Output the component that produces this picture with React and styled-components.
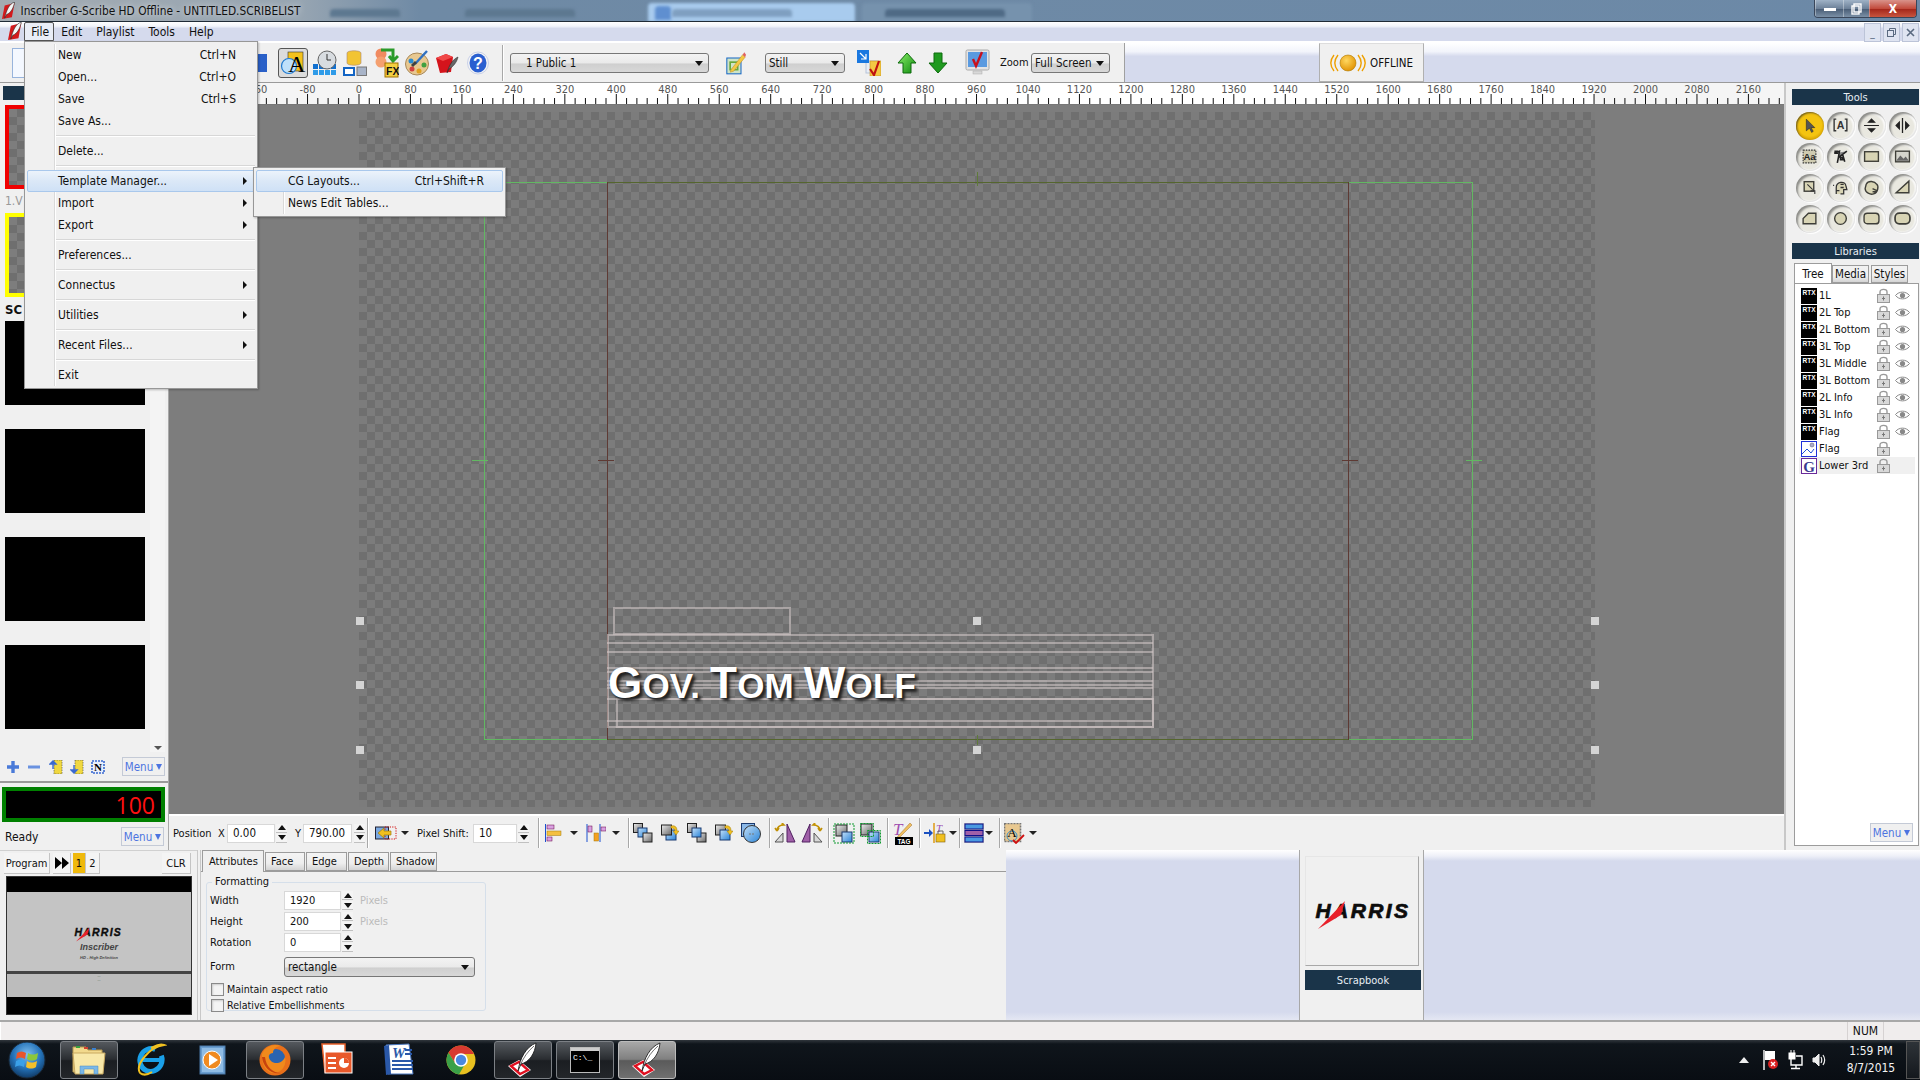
import React from "react";
import styled, { createGlobalStyle, css } from "styled-components";

const GlobalStyle = createGlobalStyle`
  html, body { margin: 0; padding: 0; background: #f0f0f0; }
  #root { width: 1920px; height: 1080px; }
  * { box-sizing: border-box; }
`;

const uiFont = `"DejaVu Sans", "Noto Sans", sans-serif`;
const navy = "#1a3449";
const menuBg = "#f0f0f0";

const Win = styled.div`
  width: 1920px;
  height: 1080px;
  display: flex;
  flex-direction: column;
  position: relative;
  overflow: hidden;
  background: ${menuBg};
  color: #111;
  font-family: ${uiFont};
  font-stretch: condensed;
  font-size: 12px;
`;

/* ---------- title bar ---------- */
const TitleBar = styled.div`
  height: 22px;
  flex: none;
  position: relative;
  overflow: hidden;
  display: flex;
  align-items: center;
  padding-left: 2px;
  gap: 5px;
  border-bottom: 1px solid #1f2a36;
  background: linear-gradient(90deg, #a3abb2 0, #97a5b2 300px, #6f8aa5 420px, #6c89a7 100%);
`;
const TitleText = styled.span`
  font-size: 11.8px;
  color: #111;
  position: relative;
  text-shadow: 0 0 6px rgba(255, 255, 255, 0.8);
`;
const GlassBlur = styled.div`
  position: absolute;
  left: ${(p) => p.$x}px;
  top: ${(p) => p.$y}px;
  width: ${(p) => p.$w}px;
  height: ${(p) => p.$h}px;
  background: ${(p) => p.$c};
  border-radius: 4px 4px 0 0;
  filter: blur(1.5px);
`;
const CaptionGroup = styled.div`
  position: absolute;
  right: 3px;
  top: 0;
  height: 18px;
  display: flex;
  border: 1px solid #39465a;
  border-top: none;
  border-radius: 0 0 4px 4px;
  overflow: hidden;
`;
const CaptionBtn = styled.div`
  width: ${(p) => p.$w}px;
  display: flex;
  align-items: center;
  justify-content: center;
  color: #fff;
  font-weight: bold;
  border-left: 1px solid rgba(255, 255, 255, 0.35);
  background: ${(p) =>
    p.$close
      ? "linear-gradient(#d9938a, #c24b3c 50%, #a5281b 55%, #c8553f)"
      : "linear-gradient(#9fb2c6, #6d8199 50%, #4b5f78 55%, #7b90a6)"};
`;

/* ---------- menu bar ---------- */
const barGradient = css`
  background: linear-gradient(#fff 0, #f2f4fb 22%, #d5daed 34%, #d5daed 100%);
`;
const MenuBar = styled.div`
  height: 21px;
  flex: none;
  display: flex;
  align-items: center;
  position: relative;
  padding-left: 8px;
  border-bottom: 2px solid;
  border-image: linear-gradient(#a5a5a5 50%, #fff 50%) 1;
  ${barGradient}
`;
const MenuTitle = styled.div`
  height: 19px;
  margin-left: ${(p) => p.$ml || 0}px;
  padding: 0 7px;
  display: flex;
  align-items: center;
  ${(p) =>
    p.$open &&
    css`
      width: 30px;
      padding: 0 6px;
      background: #e9edf6;
      border: 1px solid #555;
      border-radius: 2px 2px 0 0;
    `}
`;
const MdiButtons = styled.div`
  position: absolute;
  right: 1px;
  top: 1px;
  display: flex;
  gap: 2px;
`;
const MdiBtn = styled.div`
  width: 17px;
  height: 19px;
  background: #dfe4f1;
  border: 1px solid #bcc4d8;
  color: #5a6a80;
  display: flex;
  align-items: center;
  justify-content: center;
  font-size: 10px;
`;

/* ---------- top toolbar ---------- */
const TopRow = styled.div`
  height: 40px;
  flex: none;
  display: flex;
  border-bottom: 1px solid #9a9a9a;
  ${barGradient}
`;
const Toolbar = styled.div`
  width: 1125px;
  display: flex;
  align-items: center;
  background: ${menuBg};
  border-right: 1px solid #a0a0a0;
`;
const Slot = styled.div`
  flex: none;
  display: flex;
  align-items: center;
  justify-content: center;
  margin-left: ${(p) => p.$ml || 0}px;
  width: ${(p) => p.$w}px;
  height: ${(p) => p.$h || 26}px;
`;
const PressedSlot = styled(Slot)`
  border: 1px solid #555;
  border-radius: 3px;
  background: #dcdcdc;
`;
const Sep = styled.div`
  flex: none;
  width: 1px;
  height: ${(p) => p.$h || 36}px;
  margin-left: ${(p) => p.$ml || 0}px;
  background: #a8a8a8;
  box-shadow: 1px 0 #fff;
`;
const Select = styled.div`
  flex: none;
  position: relative;
  margin-left: ${(p) => p.$ml || 0}px;
  width: ${(p) => p.$w}px;
  height: 20px;
  padding-left: ${(p) => p.$pad || 3}px;
  font-size: 11.5px;
  display: flex;
  align-items: center;
  border: 1px solid #777;
  border-radius: 3px;
  background: linear-gradient(#f3f3f3, #eaeaea 50%, #cfcfcf 55%, #d8d8d8);
  &::after {
    content: "";
    position: absolute;
    right: 5px;
    top: 7px;
    border: 4px solid transparent;
    border-top: 5px solid #111;
    border-bottom: none;
  }
`;
const BarLabel = styled.span`
  flex: none;
  margin-left: ${(p) => p.$ml || 0}px;
  ${(p) => p.$w && `width: ${p.$w}px;`}
  font-size: 11px;
  white-space: nowrap;
`;
const OfflineBox = styled.div`
  width: 105px;
  margin-left: 194px;
  display: flex;
  align-items: center;
  gap: 4px;
  padding-left: 10px;
  font-size: 11.5px;
  background: ${menuBg};
  border: 1px solid #b0b0b0;
  border-top-color: #ddd;
`;

/* ---------- middle ---------- */
const Middle = styled.div`
  height: 767px;
  flex: none;
  display: flex;
`;
const LeftPanel = styled.div`
  width: 169px;
  flex: none;
  padding-top: 3px;
  display: flex;
  flex-direction: column;
  border-right: 1px solid #a8a8a8;
`;
const PanelHead = styled.div`
  height: ${(p) => p.$h || 16}px;
  flex: none;
  margin: ${(p) => p.$m || 0};
  background: ${navy};
  color: #e8eef4;
  font-size: 11px;
  display: flex;
  align-items: center;
  justify-content: center;
`;
const ThumbList = styled.div`
  height: 647px;
  margin-top: 5px;
  flex: none;
  position: relative;
  overflow: hidden;
  padding-left: 5px;
`;
const ScrollTrack = styled.div`
  position: absolute;
  right: 3px;
  top: 0;
  bottom: 0;
  width: 15px;
  background: #f4f4f4;
  &::after {
    content: "";
    position: absolute;
    left: 4px;
    bottom: 2px;
    border: 4px solid transparent;
    border-top: 4px solid #555;
    border-bottom: none;
  }
`;
const ThumbItem = styled.div`
  height: 108px;
`;
const Thumb = styled.div`
  width: 140px;
  height: 84px;
  background: #000;
  ${(p) =>
    p.$frame &&
    css`
      border: 4px solid ${p.$frame};
      background: repeating-conic-gradient(#6f6f6f 0 25%, #7d7d7d 0 50%) 0 0 / 16px 16px;
    `}
`;
const ThumbCaption = styled.div`
  height: 24px;
  display: flex;
  align-items: center;
  font-size: ${(p) => (p.$bold ? 13 : 12)}px;
  font-weight: ${(p) => (p.$bold ? "bold" : "normal")};
  color: ${(p) => (p.$bold ? "#111" : "#999")};
`;
const LeftTools = styled.div`
  height: 29px;
  flex: none;
  display: flex;
  align-items: center;
  padding-left: 6px;
  position: relative;
`;
const MenuButton = styled.div`
  position: absolute;
  right: ${(p) => p.$r}px;
  top: ${(p) => p.$t}px;
  width: 43px;
  height: 19px;
  display: flex;
  align-items: center;
  justify-content: center;
  gap: 3px;
  font-size: 11.5px;
  color: #4d74e0;
  background: #f0f0f0;
  border: 1px solid #c4cad6;
  &::after {
    content: "";
    border: 3px solid transparent;
    border-top: 6px solid #4d74e0;
    border-bottom: none;
  }
`;
const HeavyRule = styled.div`
  height: 2px;
  flex: none;
  background: #9a9a9a;
`;
const Counter = styled.div`
  height: 35px;
  flex: none;
  margin: 4px 3px 0 2px;
  border: 4px solid #008000;
  background: #000;
  color: #ff1010;
  font-size: 23px;
  font-stretch: normal;
  font-family: "Open Sans", sans-serif;
  display: flex;
  align-items: center;
  justify-content: flex-end;
  padding-right: 6px;
`;
const ReadyRow = styled.div`
  height: 28px;
  flex: none;
  position: relative;
  display: flex;
  align-items: center;
  padding: 2px 0 0 5px;
`;

const Center = styled.div`
  width: 1615px;
  flex: none;
  display: flex;
  flex-direction: column;
`;
const RulerWrap = styled.div`
  height: 22px;
  flex: none;
  border-bottom: 1px solid #777;
  background: #f5f5f5;
`;
const Canvas = styled.div`
  height: 709px;
  flex: none;
  position: relative;
  overflow: hidden;
  background: #7d7d7d;
`;
const Checker = styled.div`
  position: absolute;
  left: 190px;
  top: 7px;
  width: 1236px;
  height: 695px;
  background: repeating-conic-gradient(#6f6f6f 0 25%, #7c7c7c 0 50%) 0 0 / 16px 16px;
`;
const Box = styled.div`
  position: absolute;
  left: ${(p) => p.$x - 169}px;
  top: ${(p) => p.$y - 105}px;
  width: ${(p) => p.$w}px;
  height: ${(p) => p.$h}px;
  ${(p) => p.$border && `border: ${p.$bw || 1}px solid ${p.$border};`}
  ${(p) => p.$fill && `background: ${p.$fill};`}
`;
const GovText = styled.div`
  position: absolute;
  left: ${608 - 169}px;
  top: ${658 - 105}px;
  color: #fff;
  font-family: "Liberation Sans", Arial, sans-serif;
  font-stretch: normal;
  font-weight: bold;
  font-size: 35px;
  line-height: 50px;
  white-space: nowrap;
  letter-spacing: 0.2px;
  text-shadow: 3px 3px 3px #222, 1px 1px 2px #333;
`;
const Cap = styled.span`
  font-size: 44px;
`;

const PosBar = styled.div`
  height: 36px;
  flex: none;
  display: flex;
  align-items: center;
  padding-left: 4px;
  font-size: 11.5px;
  background: ${menuBg};
  border-top: 2px solid #fff;
`;
const Field = styled.div`
  flex: none;
  width: ${(p) => p.$w}px;
  height: 19px;
  margin-left: ${(p) => p.$ml || 0}px;
  background: #fff;
  border: 1px solid #d8d8d8;
  display: flex;
  align-items: center;
  padding-left: ${(p) => p.$pad || 5}px;
`;
const SpinWrap = styled.div`
  flex: none;
  width: 11px;
  height: 19px;
  margin-left: ${(p) => p.$ml ?? 1}px;
  display: flex;
  flex-direction: column;
  gap: 1px;
`;
const SpinPart = styled.div`
  flex: 1;
  background: #f4f4f4;
  border-bottom: 1px solid #c0c0c0;
  display: flex;
  align-items: center;
  justify-content: center;
  &::after {
    content: "";
    border-left: 4px solid transparent;
    border-right: 4px solid transparent;
    ${(p) => (p.$down ? "border-top: 5px solid #111;" : "border-bottom: 5px solid #111;")}
  }
`;
const Drop = styled.div`
  flex: none;
  margin-left: ${(p) => p.$ml || 0}px;
  border-left: 4px solid transparent;
  border-right: 4px solid transparent;
  border-top: 4px solid #222;
`;

const RightPanel = styled.div`
  width: 136px;
  flex: none;
  padding: 6px 1px 0 6px;
  display: flex;
  flex-direction: column;
  border-left: 2px solid #c8c8c8;
  background: #f0f0f0;
`;
const ToolGrid = styled.div`
  display: grid;
  grid-template-columns: repeat(4, 31px);
  grid-auto-rows: 31px;
  margin-top: 5px;
  margin-left: 2px;
  justify-items: center;
  align-items: center;
`;
const RoundTool = styled.div`
  width: 28px;
  height: 28px;
  border-radius: 50%;
  display: flex;
  align-items: center;
  justify-content: center;
  background: ${(p) =>
    p.$on
      ? "radial-gradient(circle at 50% 45%, #f4c410 0 55%, #d39f00 75%, #9a7c20 100%)"
      : "radial-gradient(circle at 48% 52%, #e9e8e0 0 54%, #ffffff 66%, #f4f4f4 72%, #c8c8c4 84%, #8e8e8a 100%)"};
  box-shadow: ${(p) =>
    p.$on ? "inset 1px 1px 2px #6a5a20" : "inset 2px 2px 2px #8e8e8a, inset -1px -1px 1px #e4e4e4, 1px 1px 1px #fff"};
`;
const TabRow = styled.div`
  margin-top: 4px;
  height: 20px;
  flex: none;
  display: flex;
  align-items: flex-end;
  padding-left: 2px;
  font-size: 11.5px;
`;
const SmallTab = styled.div`
  flex: none;
  width: ${(p) => p.$w}px;
  height: ${(p) => (p.$on ? 21 : 18)}px;
  margin-left: ${(p) => p.$ml || 0}px;
  margin-bottom: ${(p) => (p.$on ? -1 : 0)}px;
  position: relative;
  display: flex;
  align-items: center;
  justify-content: center;
  background: ${(p) => (p.$on ? "#fff" : "linear-gradient(#f2f2f2, #f0f0f0 60%, #d4d4d4)")};
  border: 1px solid #9c9c9c;
  border-bottom: ${(p) => (p.$on ? "none" : "1px solid #9c9c9c")};
`;
const TreeFrame = styled.div`
  flex: 1;
  position: relative;
  margin: 0 0 4px 2px;
  padding: 3px 3px 0 4px;
  border: 1px solid #9c9c9c;
  background: #fff;
`;
const TreeRow = styled.div`
  height: 17px;
  display: flex;
  align-items: center;
  background: ${(p) => (p.$sel ? "#f0f0f0" : "transparent")};
  padding-left: 2px;
`;
const RtxBadge = styled.span`
  flex: none;
  width: 16px;
  height: 16px;
  background: #000;
  color: #fff;
  font-family: "Liberation Sans", sans-serif;
  font-stretch: normal;
  font-size: 6.5px;
  font-weight: bold;
  line-height: 10px;
  text-align: center;
  overflow: hidden;
`;
const TreeName = styled.span`
  flex: none;
  width: 58px;
  margin-left: 2px;
  font-size: 11px;
  white-space: nowrap;
`;

/* ---------- bottom ---------- */
const BottomRow = styled.div`
  height: 172px;
  flex: none;
  display: flex;
  border-bottom: 2px solid #a8a8a8;
`;
const ProgramPanel = styled.div`
  width: 197px;
  flex: none;
  padding: 2px 0 0 4px;
  font-size: 11px;
  border-top: 1px solid #d0d0d0;
`;
const ProgramTabs = styled.div`
  height: 21px;
  display: flex;
  align-items: stretch;
`;
const ProgTab = styled.div`
  flex: none;
  width: ${(p) => p.$w}px;
  margin-left: ${(p) => p.$ml || 0}px;
  display: flex;
  align-items: center;
  justify-content: center;
  background: ${(p) => (p.$on ? "#efb90c" : "#f4f4f4")};
  border-right: 1px solid #c4c4c4;
  border-bottom: 1px solid #c4c4c4;
`;
const Preview = styled.div`
  width: 186px;
  height: 139px;
  margin: 2px 0 0 2px;
  display: flex;
  flex-direction: column;
  background: #000;
  border: 1px solid #333;
  padding: 15px 0 17px;
`;
const PreviewMain = styled.div`
  height: 82px;
  flex: none;
  background: #c4c4c4;
  display: flex;
  flex-direction: column;
  align-items: center;
  padding-top: 36px;
  border-bottom: 3px solid #444;
`;
const PreviewLow = styled.div`
  flex: 1;
  background: #bcbcbc;
  text-align: center;
  font-size: 3px;
  line-height: 4px;
  color: #222;
`;
const TinyBrand = styled.div`
  font-family: "Liberation Sans", sans-serif;
  font-stretch: normal;
  font-style: italic;
  font-weight: bold;
  font-size: ${(p) => p.$s}px;
  line-height: ${(p) => p.$s + 2}px;
  margin-top: ${(p) => p.$mt || 0}px;
  color: #444;
  white-space: nowrap;
`;
const AttrPanel = styled.div`
  width: 809px;
  flex: none;
  border-left: 4px double #c8c8c8;
  padding-top: 1px;
  font-size: 11px;
`;
const AttrTabs = styled.div`
  height: 21px;
  display: flex;
  align-items: flex-end;
  padding-left: 1px;
  border-bottom: 1px solid #9c9c9c;
`;
const AttrTab = styled.div`
  flex: none;
  width: ${(p) => p.$w}px;
  height: ${(p) => (p.$on ? 22 : 19)}px;
  margin-bottom: ${(p) => (p.$on ? -1 : 0)}px;
  margin-right: 1px;
  padding-left: ${(p) => (p.$on ? 6 : 5)}px;
  display: flex;
  align-items: center;
  position: relative;
  background: ${(p) => (p.$on ? "#f0f0f0" : "linear-gradient(#f4f4f4, #eee 60%, #d4d4d4)")};
  border: 1px solid #9c9c9c;
  border-bottom: ${(p) => (p.$on ? "none" : "1px solid #9c9c9c")};
`;
const GroupBox = styled.fieldset`
  width: 280px;
  height: 135px;
  margin: 4px 0 0 5px;
  padding: 2px 0 0 3px;
  border: 1px solid #d5dfea;
  border-radius: 3px;
  legend {
    margin-left: 2px;
    padding: 0 3px;
    line-height: 12px;
  }
`;
const FormGrid = styled.div`
  display: grid;
  grid-template-columns: 74px auto 1fr;
  grid-auto-rows: 21px;
  align-items: center;
  margin-top: ${(p) => p.$mt ?? 0}px;
`;
const InputCell = styled.div`
  display: flex;
  align-items: center;
`;
const Unit = styled.span`
  color: #bbb;
  margin-left: 7px;
`;
const CheckList = styled.div`
  margin-top: 4px;
  font-size: 10.6px;
`;
const CheckRow = styled.label`
  display: flex;
  align-items: center;
  gap: 3px;
  height: 16px;
  padding-left: 1px;
`;
const CheckBox = styled.span`
  width: 13px;
  height: 13px;
  flex: none;
  border: 1px solid #8a8a8a;
  box-shadow: inset 1px 1px 2px #ccc;
  background: #f4f4f4;
`;
const BlueFill = styled.div`
  flex: ${(p) => (p.$grow ? 1 : "none")};
  width: ${(p) => p.$w || 0}px;
  background: linear-gradient(#fff 0, #eef0f8 6px, #d5daed 11px, #d5daed calc(100% - 8px), #e4e7f3 100%);
`;
const ScrapPanel = styled.div`
  width: 125px;
  flex: none;
  padding: 6px 2px 0 5px;
  border-left: 1px solid #a8a8a8;
  border-right: 1px solid #a8a8a8;
  background: #f0f0f0;
`;
const LogoBox = styled.div`
  width: 114px;
  height: 110px;
  display: flex;
  flex-direction: column;
  align-items: center;
  justify-content: center;
  padding-left: 5px;
  border: 1px solid #e6e6e6;
  border-right-color: #a8a8a8;
  border-bottom-color: #a8a8a8;
`;
const ScrapHead = styled(PanelHead)`
  width: 116px;
  height: 20px;
  margin-top: 4px;
`;
const HarrisWrap = styled.div`
  position: relative;
  height: ${(p) => 18 * p.$k}px;
  width: ${(p) => 98 * p.$k}px;
`;
const HarrisText = styled.span`
  position: absolute;
  left: 0;
  top: 0;
  font-family: "Liberation Sans", Arial, sans-serif;
  font-stretch: normal;
  font-style: italic;
  font-weight: bold;
  font-size: ${(p) => 21 * p.$k}px;
  line-height: ${(p) => 18 * p.$k}px;
  letter-spacing: ${(p) => 2.4 * p.$k}px;
  color: #0c0c0c;
  -webkit-text-stroke: ${(p) => 0.7 * p.$k}px #0c0c0c;
`;
const Swoosh = styled.svg`
  position: absolute;
  left: 0;
  top: 0;
`;

/* ---------- status + taskbar ---------- */
const StatusBar = styled.div`
  height: 18px;
  flex: none;
  display: flex;
  justify-content: flex-end;
  background: #f0eded;
  border-left: 1px solid #fff;
`;
const NumCell = styled.div`
  width: 37px;
  margin-right: 36px;
  display: flex;
  align-items: center;
  justify-content: center;
  border-left: 1px solid #d6d2d2;
  border-right: 1px solid #d6d2d2;
`;
const Taskbar = styled.div`
  height: 40px;
  flex: none;
  display: flex;
  align-items: center;
  padding-left: 2px;
  background: linear-gradient(#30363c 0, #0f151b 4px, #090d13 100%);
  color: #f4f4f4;
`;
const OrbSlot = styled.div`
  width: 50px;
  flex: none;
  margin-right: 8px;
  display: flex;
  justify-content: center;
`;
const TaskSlot = styled.div`
  width: 58px;
  height: 38px;
  flex: none;
  margin-right: 4px;
  display: flex;
  align-items: center;
  justify-content: center;
  border-radius: 3px;
  ${(p) =>
    p.$running &&
    css`
      border: 1px solid #7c8085;
      background: linear-gradient(#55595e, #2a2d31 48%, #1b1e22 52%, #23262a);
    `}
  ${(p) =>
    p.$active &&
    css`
      background: linear-gradient(#a8a8a8, #808080 48%, #5a5a5a 52%, #707070);
      border-color: #bbb;
    `}
`;
const Tray = styled.div`
  margin-left: auto;
  display: flex;
  align-items: center;
`;
const TrayIcon = styled.div`
  flex: none;
  margin-left: ${(p) => p.$ml}px;
  display: flex;
`;
const Clock = styled.div`
  margin-left: 16px;
  width: 56px;
  text-align: center;
  font-size: 12px;
  line-height: 17px;
`;
const ShowDesktop = styled.div`
  width: 14px;
  height: 38px;
  margin-left: 7px;
  border: 1px solid #555;
  background: linear-gradient(#2e3338, #14181d);
`;

/* ---------- popup menus ---------- */
const Popup = styled.div`
  position: absolute;
  left: ${(p) => p.$x}px;
  top: ${(p) => p.$y}px;
  width: ${(p) => p.$w}px;
  padding: 2px;
  background: ${menuBg};
  border: 1px solid #979797;
  box-shadow: 1px 1px 2px rgba(0, 0, 0, 0.25);
  z-index: 5;
  &::before {
    content: "";
    position: absolute;
    left: ${(p) => p.$gutter}px;
    top: 2px;
    bottom: 2px;
    width: 1px;
    background: #d9d9d9;
    box-shadow: 1px 0 #fff;
  }
`;
const Item = styled.div`
  height: 22px;
  position: relative;
  display: flex;
  align-items: center;
  padding-left: ${(p) => p.$pad}px;
  padding-right: ${(p) => p.$rpad || 18}px;
  justify-content: space-between;
  border: 1px solid transparent;
  border-radius: 2px;
  ${(p) =>
    p.$hot &&
    css`
      background: linear-gradient(#ecf3fb, #dbe8f7 50%, #cfe1f6);
      border-color: #a9c8ec;
    `}
`;
const Arrow = styled.span`
  position: absolute;
  right: 7px;
  top: 6px;
  border-top: 4px solid transparent;
  border-bottom: 4px solid transparent;
  border-left: 4px solid #111;
`;
const MenuSep = styled.div`
  height: 8px;
  margin-left: ${(p) => p.$ml}px;
  position: relative;
  &::after {
    content: "";
    position: absolute;
    left: 0;
    right: 0;
    top: 3px;
    height: 1px;
    background: #d7d7d7;
    box-shadow: 0 1px #fff;
  }
`;

/* ---------- icons ---------- */
const Quill = ({ size = 20 }) => (
  <svg width={size * 0.75} height={size} viewBox="0 0 15 20">
    <path d="M3 4 L14 1 L11 17 L0 19Z" fill="#d3191c" />
    <path d="M14 0 C8 2 5 9 3 18 L5 14 C10 12 13 6 14 0Z" fill="#f6f6f6" stroke="#222" strokeWidth=".6" />
  </svg>
);
const TaskQuill = () => (
  <svg width="36" height="36" viewBox="0 0 36 36">
    <path d="M3 24 L14 18 L26 28 L15 35Z" fill="#fff" />
    <path d="M6 24 L14 20 L23 28 L15 32Z" fill="none" stroke="#e01020" strokeWidth="2.4" />
    <path d="M31 1 C21 5 15 16 13 29 L16 22 C24 20 30 12 31 1Z" fill="#fff" stroke="#111" strokeWidth=".8" />
    <path d="M29 4 C23 9 18 16 15 24" stroke="#333" strokeWidth=".7" fill="none" />
  </svg>
);
const Tri = ({ up }) => (
  <svg width="20" height="22" viewBox="0 0 20 22">
    <path
      d={up ? "M10 1 L19 11 L14 11 L14 21 L6 21 L6 11 L1 11Z" : "M10 21 L19 11 L14 11 L14 1 L6 1 L6 11 L1 11Z"}
      fill={up ? "url(#gu)" : "#1f9a1f"}
      stroke="#0d6a0d"
      strokeWidth="1"
    />
    <defs>
      <linearGradient id="gu" x1="0" y1="0" x2="1" y2="1">
        <stop offset="0" stopColor="#8cf06a" />
        <stop offset="1" stopColor="#0d8a0d" />
      </linearGradient>
    </defs>
  </svg>
);
const AIcon = () => (
  <svg width="26" height="26" viewBox="0 0 26 26">
    <rect x="8" y="2" width="15" height="19" fill="#f4c21c" stroke="#333" strokeWidth=".6" />
    <circle cx="9" cy="16" r="7.5" fill="#bfe0fa" stroke="#1f7ad0" strokeWidth="1.2" />
    <text x="8" y="22" fontFamily="Liberation Serif" fontSize="24" fill="#000">A</text>
  </svg>
);
const ClockIcon = () => (
  <svg width="24" height="26" viewBox="0 0 24 26">
    {[0, 1, 2, 3].map((c) =>
      [0, 1].map((r) => <rect key={c + "" + r} x={c * 6} y={14 + r * 6} width="5" height="5" fill={r ? "#2e9be8" : "#1070d0"} />)
    )}
    <circle cx="14" cy="10" r="9" fill="#d8dce0" stroke="#666" />
    <path d="M14 4 V10 H18" stroke="#333" fill="none" />
  </svg>
);
const DbIcon = () => (
  <svg width="24" height="26" viewBox="0 0 24 26">
    <path d="M4 3 C4 0 18 0 18 3 V13 C18 16 4 16 4 13Z" fill="#f2c433" stroke="#a87" strokeWidth=".6" />
    <rect x="1" y="18" width="10" height="7" fill="#fff" stroke="#1264c4" strokeWidth="2" />
    <rect x="14" y="17" width="9.5" height="8.5" fill="#a8b4c8" stroke="#777" />
  </svg>
);
const FxIcon = () => (
  <svg width="24" height="30" viewBox="0 0 24 30">
    <circle cx="6" cy="6" r="5.5" fill="#f08a60" />
    <circle cx="6" cy="14" r="5.5" fill="#f4a070" />
    <path d="M6 2 H18 V12 M14 8 L18 13 L23 8" stroke="#2a9a2a" strokeWidth="3" fill="none" />
    <rect x="10" y="15" width="13" height="14" fill="#f4d040" stroke="#a07000" />
    <text x="11" y="27" fontFamily="Liberation Sans" fontSize="10.5" fontWeight="bold" fill="#111">FX</text>
  </svg>
);
const PaletteIcon = () => (
  <svg width="24" height="26" viewBox="0 0 24 26">
    <ellipse cx="12" cy="14" rx="11.5" ry="11" fill="#e8c890" stroke="#a88858" />
    <circle cx="6" cy="11" r="2.5" fill="#2a8ad0" />
    <circle cx="7" cy="19" r="2.5" fill="#d04040" />
    <circle cx="14" cy="21" r="2.5" fill="#e0a020" />
    <circle cx="19" cy="15" r="2.5" fill="#40a040" />
    <path d="M22 1 L10 14" stroke="#3070c0" strokeWidth="2.4" />
    <path d="M11 12 L7 16" stroke="#404040" strokeWidth="3" />
  </svg>
);
const RedBoxIcon = () => (
  <svg width="24" height="26" viewBox="0 0 24 26">
    <path d="M1 8 L11 4 L18 7 L16 22 L5 23Z" fill="#d4141c" />
    <path d="M1 8 L11 4 L18 7 L8 11Z" fill="#f04848" />
    <path d="M23 7 C18 9 14 15 12 23 L14 19 C18 17 22 12 23 7Z" fill="#666" stroke="#222" strokeWidth=".5" />
  </svg>
);
const HelpIcon = () => (
  <svg width="22" height="24" viewBox="0 0 22 24">
    <ellipse cx="11" cy="12" rx="10.5" ry="11" fill="#f4f4f4" stroke="#c8d0e8" />
    <ellipse cx="11" cy="12" rx="8.5" ry="9.5" fill="#2a5fd0" />
    <text x="11" y="18" textAnchor="middle" fontFamily="Liberation Sans" fontWeight="bold" fontSize="16" fill="#fff">?</text>
  </svg>
);
const PencilIcon = () => (
  <svg width="20" height="28" viewBox="0 0 24 28">
    <rect x="1" y="8" width="17" height="19" fill="#cfe4c8" stroke="#1264c4" strokeWidth="1.2" />
    <rect x="5" y="13" width="9" height="9" fill="none" stroke="#6aa83a" strokeWidth="2" />
    <path d="M6 22 L20 4 L23 7 L9 24 L5 25Z" fill="#f4c843" stroke="#b88a20" strokeWidth=".6" />
    <path d="M20 4 L22 1 L24 4 L23 7Z" fill="#e06060" />
  </svg>
);
const CopyCheckIcon = () => (
  <svg width="24" height="26" viewBox="0 0 24 26">
    <rect x="9" y="11" width="12" height="12" fill="#e8eef8" stroke="#b8c4d8" />
    <rect x="13" y="11" width="11" height="15" fill="#f4c843" stroke="#c09020" strokeWidth=".6" />
    <rect x="0" y="0" width="12" height="13" fill="#1a78e0" />
    <path d="M3 3 L9 9 M9 4 V9 H4" stroke="#fff" strokeWidth="1.2" fill="none" />
    <path d="M13 19 L17 25 L22 11" stroke="#c01010" strokeWidth="2.2" fill="none" />
  </svg>
);
const MonitorIcon = () => (
  <svg width="25" height="28" viewBox="0 0 25 28">
    <rect x="1" y="1" width="23" height="20" rx="1.5" fill="#e4e4e4" stroke="#aaa" />
    <rect x="3" y="3" width="19" height="15" fill="#5a9ae0" />
    <path d="M8 10 L11 17 L17 3" stroke="#c8101c" strokeWidth="2.4" fill="none" />
    <rect x="8" y="22" width="9" height="3" fill="#d8d8d8" stroke="#aaa" strokeWidth=".5" />
  </svg>
);
const OfflineIcon = () => (
  <svg width="36" height="18" viewBox="0 0 36 18">
    <defs>
      <radialGradient id="og" cx=".4" cy=".35" r=".7">
        <stop offset="0" stopColor="#ffd860" />
        <stop offset="1" stopColor="#e09000" />
      </radialGradient>
    </defs>
    <ellipse cx="18" cy="9" rx="8" ry="8" fill="url(#og)" stroke="#b07800" strokeWidth=".6" />
    <path d="M8 1 C4 6 4 12 8 17 M4 1 C0 6 0 12 4 17 M28 1 C32 6 32 12 28 17 M32 1 C36 6 36 12 32 17" stroke="#eea000" strokeWidth="1.4" fill="none" />
  </svg>
);

const g = { stroke: "#333", fill: "none", strokeWidth: 1.3 };
const shape = { fill: "#d8d4b4", stroke: "#3e3e38", strokeWidth: 1.3 };
const toolGlyphs = [
  <path d="M5 2 V13 L8 10.5 L10 14.5 L11.5 13.5 L9.5 10 H13Z" fill="#555" stroke="#222" strokeWidth=".5" />,
  <>
    <path d="M4 2 H2 V13 H4 M12 2 H14 V13 H12" {...g} />
    <text x="8" y="11.5" textAnchor="middle" fontSize="10" fontWeight="bold" fontFamily="Liberation Sans" fill="#333">A</text>
  </>,
  <path d="M1 8 H15 M5 5 L8 2 L11 5Z M5 11 L8 14 L11 11Z" stroke="#222" fill="#222" strokeWidth="1" />,
  <path d="M8 1 V15 M5 5 L2 8 L5 11Z M11 5 L14 8 L11 11Z" stroke="#222" fill="#222" strokeWidth="1.2" />,
  <>
    <rect x="2" y="2" width="12" height="12" fill="#cfcbb0" stroke="#333" strokeDasharray="1.5 1" />
    <text x="8" y="11" textAnchor="middle" fontSize="9" fontWeight="bold" fontFamily="Liberation Sans" fill="#222">Aa</text>
  </>,
  <path d="M2 5 L7 3 L6 9 L10 6 L14 3 M6 9 L5 14 M10 6 L12 13 M3 3 H5 V5 H3Z M8 9 H10 V11 H8Z" stroke="#222" fill="#888" strokeWidth="1.5" />,
  <rect x="1.5" y="3.5" width="13" height="9" {...shape} />,
  <>
    <rect x="1.5" y="3" width="13" height="10" {...shape} fill="#d4d4cc" />
    <path d="M2 12 L6 7 L9 10 L11 8 L14 12Z" fill="#666" />
  </>,
  <>
    <rect x="3" y="2.5" width="9" height="9" {...shape} />
    <path d="M6 5 L11 10 M9 11 H13 V14" stroke="#333" fill="none" />
  </>,
  <path d="M4 14 V8 C4 3 12 1 13 6 L14 10 H11 V14 H8 M2 6 H1 M4 11 H7 M8 5 H11 M8 8 H11" stroke="#333" fill="#d8d4b4" strokeWidth="1.2" />,
  <path d="M3 5 C5 1 11 2 13 5 C15 7 14 13 10 14 C7 15 2 13 2 9Z M9 9 L13 11 M9 12 H13" {...shape} />,
  <path d="M2 13 L14 2 V13Z" {...shape} />,
  <path d="M2 13 V8 L7 3 H14 V13Z" {...shape} />,
  <circle cx="8" cy="8" r="5.5" {...shape} />,
  <rect x="1" y="3" width="14" height="10" rx="3" {...shape} />,
  <rect x="1" y="3" width="14" height="10" rx="4" {...shape} strokeWidth="1.6" />,
];

const LockIcon = () => (
  <svg width="13" height="15" viewBox="0 0 13 15">
    <path d="M3 7 V4 C3 0.5 10 0.5 10 4 V7" fill="none" stroke="#999" strokeWidth="1.4" />
    <rect x="0.5" y="6.5" width="12" height="8" fill="#d8d8d8" stroke="#999" />
    <path d="M6.5 8.5 V12.5 M5 10.5 H8" stroke="#777" />
  </svg>
);
const EyeIcon = () => (
  <svg width="15" height="9" viewBox="0 0 15 9">
    <path d="M0.5 4.5 C4 0 11 0 14.5 4.5 C11 9 4 9 0.5 4.5Z" fill="#fff" stroke="#888" />
    <circle cx="7.5" cy="4.5" r="2.6" fill="#888" />
  </svg>
);
const FlagThumb = () => (
  <svg width="16" height="16" viewBox="0 0 16 16">
    <rect x=".5" y=".5" width="15" height="15" fill="#fff" stroke="#1f30d8" />
    <path d="M1 13 L6 8 L10 12 L13 8" stroke="#1f50d8" fill="none" />
    <circle cx="11" cy="4" r="2" fill="#aac" stroke="#557" strokeWidth=".5" />
  </svg>
);
const GThumb = () => (
  <svg width="16" height="16" viewBox="0 0 16 16">
    <rect x=".5" y=".5" width="15" height="15" fill="#fff" stroke="#6a2a9a" />
    <text x="8" y="13.5" textAnchor="middle" fontFamily="Liberation Serif" fontWeight="bold" fontSize="15" fill="#3a3a90">G</text>
  </svg>
);

const MiniPlus = () => (
  <svg width="14" height="14" viewBox="0 0 14 14">
    <path d="M7 1 V13 M1 7 H13" stroke="#4a7ad8" strokeWidth="3.4" />
  </svg>
);
const MiniMinus = () => (
  <svg width="14" height="14" viewBox="0 0 14 14">
    <path d="M1 7 H13" stroke="#6a92e0" strokeWidth="3" />
  </svg>
);
const MiniUp = ({ down }) => (
  <svg width="14" height="14" viewBox="0 0 14 14">
    <rect x="5" y="0" width="8" height="14" fill="#f0d840" stroke="#444" strokeWidth=".6" strokeDasharray="1.5 1" />
    <path d={down ? "M4 5 V10 H1 L4 13 L7 10 H4" : "M4 9 V4 H1 L4 1 L7 4 H4"} fill="#3a6ad0" stroke="#3a6ad0" strokeWidth="1.4" />
  </svg>
);
const MiniN = () => (
  <svg width="14" height="14" viewBox="0 0 14 14">
    <rect x="1" y="1" width="12" height="12" fill="#e8eefc" stroke="#3a6ad0" strokeDasharray="2 1" strokeWidth="1.6" />
    <text x="7" y="11" textAnchor="middle" fontFamily="Liberation Serif" fontWeight="bold" fontSize="11">N</text>
  </svg>
);

const MoveIcon = () => (
  <svg width="22" height="14" viewBox="0 0 22 14">
    <rect x=".5" y="1" width="13" height="12" fill="#7aa8e0" stroke="#223" />
    <rect x="10" y="1" width="11" height="12" fill="none" stroke="#d01010" strokeDasharray="1.2 1.2" />
    <path d="M3 7 L9 2 V5 H16 V9 H9 V12Z" fill="#f0c020" stroke="#a07808" strokeWidth=".7" />
  </svg>
);
const AlignLeft = () => (
  <svg width="17" height="18" viewBox="0 0 17 18">
    <path d="M.5 0 V18" stroke="#1a50d0" />
    <rect x="2" y="1" width="7" height="4" fill="#d8a0e0" stroke="#604" strokeWidth=".5" />
    <rect x="2" y="7" width="14" height="4.5" fill="#f4c040" stroke="#a07808" strokeWidth=".5" />
    <rect x="2" y="13" width="5" height="4" fill="#d8a0e0" stroke="#604" strokeWidth=".5" />
  </svg>
);
const AlignDist = () => (
  <svg width="20" height="18" viewBox="0 0 20 18">
    <path d="M1 0 V18 M14 0 V18" stroke="#1a50d0" />
    <rect x="2" y="2" width="4" height="6" fill="#d8a0e0" stroke="#604" strokeWidth=".5" />
    <rect x="8" y="9" width="4.5" height="8" fill="#f4a020" stroke="#a07808" strokeWidth=".5" />
    <rect x="15" y="3" width="5" height="4" fill="#d8a0e0" stroke="#604" strokeWidth=".5" />
  </svg>
);
const grey = "url(#gr)";
const blue = "url(#bl)";
const StackDefs = () => (
  <svg width="0" height="0" style={{ position: "absolute" }}>
    <defs>
      <linearGradient id="gr" x1="0" y1="0" x2="1" y2="1">
        <stop offset="0" stopColor="#eee" />
        <stop offset="1" stopColor="#666" />
      </linearGradient>
      <linearGradient id="bl" x1="0" y1="0" x2="1" y2="1">
        <stop offset="0" stopColor="#c4e0f8" />
        <stop offset="1" stopColor="#2a84d8" />
      </linearGradient>
    </defs>
  </svg>
);
const Stack3 = ({ back }) => (
  <svg width="20" height="20" viewBox="0 0 20 20">
    <rect x=".5" y=".5" width="9" height="9" fill={grey} stroke="#222" />
    {!back && <rect x="5" y="5" width="9" height="9" fill={blue} stroke="#1a3a70" />}
    <rect x="10" y="10" width="9" height="9" fill={grey} stroke="#222" />
    {back && <rect x="5" y="5" width="9" height="9" fill={blue} stroke="#1a3a70" />}
  </svg>
);
const StackFwd = ({ back }) => (
  <svg width="18" height="18" viewBox="0 0 18 18">
    {back ? (
      <>
        <rect x=".5" y="1" width="10" height="10" fill={grey} stroke="#222" />
        <rect x="5" y="6" width="10" height="10" fill={blue} stroke="#1a3a70" />
      </>
    ) : (
      <>
        <rect x="5" y="6" width="10" height="10" fill={blue} stroke="#1a3a70" />
        <rect x=".5" y="1" width="10" height="10" fill={grey} stroke="#222" />
      </>
    )}
    <path d="M10 2 C15 1 16 4 16 7 H18 L15 11 L12 7 H14 C14 5 13 4 10 4Z" fill="#f0c020" stroke="#a07808" strokeWidth=".5" />
  </svg>
);
const CircleSq = () => (
  <svg width="20" height="20" viewBox="0 0 20 20">
    <rect x=".5" y=".5" width="13" height="13" fill="#8ab8e8" stroke="#1a3a70" />
    <circle cx="11" cy="11" r="8.5" fill={blue} stroke="#333" />
    <path d="M8 11 H14" stroke="#777" strokeDasharray="2 1" />
  </svg>
);
const Flip = ({ left }) => (
  <svg width="22" height="20" viewBox="0 0 22 20" style={left ? { transform: "scaleX(-1)" } : undefined}>
    <path d="M1 19 L9 10 V19Z" fill="#d8d8d8" stroke="#555" />
    <path d="M13 1 L21 19 H13Z" fill="#a060a8" stroke="#502060" />
    <path d="M3 8 C3 3 6 2 10 2 L8 0 M3 8 L1 5 M3 8 L5 5" stroke="#c09008" strokeWidth="1.6" fill="#f0c020" />
  </svg>
);
const GroupIcon = ({ split }) => (
  <svg width="22" height="21" viewBox="0 0 22 21">
    <rect x={split ? 1 : 3} y={split ? 1 : 2} width="11" height="11" fill={grey} stroke="#222" />
    <rect x="9" y="9" width="10" height="10" fill={blue} stroke="#1a3a70" />
    {split ? (
      <>
        <rect x=".5" y=".5" width="13" height="13" fill="none" stroke="#109a30" strokeDasharray="2 1" />
        <rect x="7.5" y="7.5" width="13" height="13" fill="none" stroke="#109a30" strokeDasharray="2 1" />
      </>
    ) : (
      <rect x="1" y="1" width="20" height="19" fill="none" stroke="#109a30" strokeDasharray="2 1" />
    )}
  </svg>
);
const TagIcon = () => (
  <svg width="21" height="24" viewBox="0 0 21 24">
    <text x="1" y="14" fontFamily="Liberation Serif" fontStyle="italic" fontSize="17" fill="#a050b0">T</text>
    <path d="M6 15 L18 2 L20 4 L8 16 L5 17Z" fill="#f0c060" stroke="#a07030" strokeWidth=".5" />
    <rect x="3" y="16" width="18" height="8" fill="#000" />
    <text x="12" y="22.5" textAnchor="middle" fontFamily="Liberation Sans" fontSize="6.5" fontWeight="bold" fill="#fff">TAG</text>
  </svg>
);
const LockGuide = () => (
  <svg width="22" height="20" viewBox="0 0 22 20">
    <path d="M0 9 H5 V6 L9 10 L5 14 V11 H0Z" fill="#1a50c0" />
    <path d="M10 0 V20" stroke="#e0a020" strokeWidth="1.6" />
    <text x="12" y="9" fontFamily="Liberation Serif" fontStyle="italic" fontSize="11" fill="#a050b0">T</text>
    <rect x="12" y="11" width="9" height="8" fill="#f0c020" stroke="#806010" strokeWidth=".6" />
    <path d="M14 11 V8 H19 V11" stroke="#666" fill="none" />
  </svg>
);
const RowsIcon = () => (
  <svg width="20" height="20" viewBox="0 0 20 20">
    <rect width="20" height="20" fill="#bcbcbc" />
    <rect x="1" y="1" width="18" height="5" fill="#4a9ae0" stroke="#10108a" />
    <rect x="1" y="7.5" width="18" height="5" fill="#a060a8" stroke="#10108a" />
    <rect x="1" y="14" width="18" height="5" fill="#4a9ae0" stroke="#10108a" />
  </svg>
);
const CheckTextIcon = () => (
  <svg width="21" height="21" viewBox="0 0 21 21">
    <rect x=".5" y=".5" width="16" height="18" fill="#e8c890" stroke="#777" strokeDasharray="2 1" strokeWidth="1.6" />
    <circle cx="8" cy="13" r="5" fill="none" stroke="#3a90d0" />
    <text x="8" y="14" textAnchor="middle" fontFamily="Liberation Serif" fontSize="13">A</text>
    <path d="M9 17 L12 20 L20 12" stroke="#d01010" strokeWidth="1.8" fill="none" />
  </svg>
);

const Orb = () => (
  <svg width="38" height="38" viewBox="0 0 38 38">
    <defs>
      <radialGradient id="orb" cx=".5" cy=".35" r=".7">
        <stop offset="0" stopColor="#7fc0f0" />
        <stop offset=".55" stopColor="#2472b8" />
        <stop offset="1" stopColor="#0c3058" />
      </radialGradient>
    </defs>
    <circle cx="19" cy="19" r="18" fill="url(#orb)" stroke="#1a2a3a" />
    <path d="M9 12 C12 10 15 10 18 12 L17 18 C14 16 11 16 8 18Z" fill="#e8552a" />
    <path d="M20 12 C23 14 26 14 30 12 L29 18 C26 20 22 20 19 18Z" fill="#8cc83a" />
    <path d="M8 20 C11 18 14 18 17 20 L16 26 C13 24 10 24 7 26Z" fill="#3aa0e8" />
    <path d="M19 20 C22 22 25 22 29 20 L28 26 C25 28 21 28 18 26Z" fill="#f4c02a" />
  </svg>
);
const FolderIcon = () => (
  <svg width="34" height="32" viewBox="0 0 34 32">
    <path d="M1 3 H14 L16 6 H30 V28 H1Z" fill="#f2d98c" stroke="#b89a50" />
    <path d="M1 9 H33 L31 30 H3Z" fill="#f8e8a8" stroke="#c8a860" />
    <rect x="4" y="2" width="4" height="2" fill="#3aa040" />
    <rect x="12" y="3" width="4" height="2" fill="#d04030" />
    <rect x="20" y="4" width="4" height="2" fill="#3a80d0" />
    <path d="M8 30 V22 H26 V30 H22 V25 H12 V30Z" fill="#7ab8e8" stroke="#4a88c0" strokeWidth=".5" />
  </svg>
);
const IeIcon = () => (
  <svg width="32" height="34" viewBox="0 0 32 34">
    <ellipse cx="16" cy="17" rx="11" ry="11.5" fill="none" stroke="#1aa0e8" strokeWidth="5" strokeDasharray="52 9" transform="rotate(25 16 17)" />
    <path d="M6 17 H27" stroke="#1aa0e8" strokeWidth="4" />
    <path d="M5 30 C0 22 14 4 29 2 C24 0 20 3 16 5 M5 30 C9 33 14 31 17 29" stroke="#f0c020" strokeWidth="2" fill="none" />
  </svg>
);
const WmpIcon = () => (
  <svg width="28" height="30" viewBox="0 0 28 30">
    <rect x="1" y="1" width="25" height="28" fill="#6a9ed0" stroke="#4a78a8" />
    <rect x="3" y="3" width="21" height="24" fill="#90bce4" />
    <circle cx="13" cy="15" r="9" fill="#f08a20" stroke="#fff" strokeWidth="1" />
    <path d="M10 9 L19 15 L10 21Z" fill="#fff" />
  </svg>
);
const FirefoxIcon = () => (
  <svg width="32" height="34" viewBox="0 0 32 34">
    <circle cx="16" cy="17" r="15.5" fill="#e8701a" />
    <circle cx="17" cy="15" r="9" fill="#2a64b0" />
    <path d="M3 11 C6 4 14 0 22 3 C16 3 14 7 14 10 C10 10 8 14 12 18 C16 22 24 20 26 14 C28 20 24 30 15 30 C8 30 2 22 3 11Z" fill="#f08a1c" />
    <path d="M3 14 C4 24 12 32 22 30 C14 30 7 24 6 14Z" fill="#c8440e" />
  </svg>
);
const PptIcon = () => (
  <svg width="32" height="34" viewBox="0 0 32 34">
    <path d="M1 1 H24 V29 H4Z" fill="#fff" stroke="#e8602a" strokeWidth="1.5" />
    <rect x="4" y="9" width="27" height="21" fill="#e8582a" stroke="#fff" strokeWidth="1" />
    <path d="M7 15 H15 M7 20 H15 M7 25 H15" stroke="#fff" strokeWidth="2.2" />
    <circle cx="23" cy="20" r="5" fill="#fff" />
    <path d="M23 20 V15 A5 5 0 0 1 28 20Z" fill="#e8582a" />
  </svg>
);
const WordIcon = () => (
  <svg width="32" height="34" viewBox="0 0 32 34">
    <path d="M3 2 L26 1 L30 31 L5 31Z" fill="#fff" stroke="#4a78c0" />
    <path d="M1 3 L6 2 L8 31 L3 32Z" fill="#2a58a8" />
    <text x="9" y="15" fontFamily="Liberation Serif" fontStyle="italic" fontWeight="bold" fontSize="15" fill="#2a58a8">W</text>
    <path d="M22 7 H29 M22 11 H29 M9 18 H30 M9 22 H30 M9 26 H30" stroke="#2a58a8" strokeWidth="2" />
  </svg>
);
const ChromeIcon = () => (
  <svg width="30" height="30" viewBox="0 0 30 30">
    <circle cx="15" cy="15" r="14.5" fill="#e8c020" />
    <path d="M15 .5 A14.5 14.5 0 0 0 2.5 7.7 L9 18 L15 9 H28 A14.5 14.5 0 0 0 15 .5Z" fill="#d83a30" />
    <path d="M2.5 7.7 A14.5 14.5 0 0 0 13 29.4 L19 19 L9 18Z" fill="#3aa048" />
    <circle cx="15" cy="15" r="6.8" fill="#fff" />
    <circle cx="15" cy="15" r="5.2" fill="#4a88e0" />
  </svg>
);
const CmdIcon = () => (
  <svg width="30" height="26" viewBox="0 0 30 26">
    <rect x=".5" y=".5" width="29" height="25" fill="#000" stroke="#bbb" />
    <rect x="1" y="1" width="28" height="3" fill="#ccc" />
    <text x="3" y="13" fontFamily="Liberation Mono" fontSize="8" fill="#fff">C:\_</text>
  </svg>
);
const TrayFlag = () => (
  <svg width="16" height="20" viewBox="0 0 16 20">
    <path d="M1 0 V20" stroke="#fff" strokeWidth="1.4" />
    <path d="M2 1 H12 V10 H2Z" fill="#fff" />
    <circle cx="10" cy="14" r="5" fill="#d82020" />
    <path d="M8 12 L12 16 M12 12 L8 16" stroke="#fff" strokeWidth="1.4" />
  </svg>
);
const TrayNet = () => (
  <svg width="16" height="20" viewBox="0 0 16 20" fill="none" stroke="#fff">
    <path d="M4 0 V5 M7 0 V5" />
    <rect x="2" y="3" width="6" height="6" fill="#fff" />
    <path d="M9 6 H15 V15 H4 V9 M9 15 V18 M4 18.5 H13" strokeWidth="1.4" />
  </svg>
);
const TraySpeaker = () => (
  <svg width="15" height="18" viewBox="0 0 15 18" fill="none" stroke="#eee">
    <path d="M1 7 H3 L7 3 V15 L3 11 H1Z" fill="#eee" />
    <path d="M9 6 C10 8 10 10 9 12 M11 4 C13 7 13 11 11 14" strokeWidth="1.2" />
  </svg>
);

/* ---------- small composed parts ---------- */
const Spin = ({ ml }) => (
  <SpinWrap $ml={ml}>
    <SpinPart />
    <SpinPart $down />
  </SpinWrap>
);
const Harris = ({ k = 1 }) => (
  <HarrisWrap $k={k}>
    <HarrisText $k={k}>HARRIS</HarrisText>
    <Swoosh width={98 * k} height={28 * k} viewBox="0 0 98 28" style={{ overflow: "visible" }}>
      <path d="M2 27 L29 -1 L25 13 Z" fill="#e8202a" />
    </Swoosh>
  </HarrisWrap>
);
const Ruler = () => {
  const ox = 190;
  const px = (u) => ox + (u * 51.46) / 80;
  const ticks = [];
  for (let u = -288; u <= 2240; u += 16) ticks.push(u);
  return (
    <svg width="1615" height="21" viewBox="0 0 1615 21" style={{ display: "block" }}>
      <rect x={ox} width="1235" height="21" fill="#fff" />
      {ticks.map((u) =>
        px(u) >= 0 ? (
          <line key={u} x1={px(u)} x2={px(u)} y1={u % 80 === 0 ? 11 : 15} y2="21" stroke="#111" />
        ) : null
      )}
      {ticks
        .filter((u) => u % 80 === 0 && px(u) >= 8)
        .map((u) => (
          <text key={u} x={px(u)} y="10" textAnchor="middle" fontFamily="DejaVu Sans" fontStretch="condensed" fontSize="11" fill="#555">
            {u}
          </text>
        ))}
    </svg>
  );
};

const fileItems = [
  { t: "New", k: "Ctrl+N" },
  { t: "Open...", k: "Ctrl+O" },
  { t: "Save", k: "Ctrl+S" },
  { t: "Save As..." },
  "-",
  { t: "Delete..." },
  "-",
  { t: "Template Manager...", sub: true, hot: true },
  { t: "Import", sub: true },
  { t: "Export", sub: true },
  "-",
  { t: "Preferences..." },
  "-",
  { t: "Connectus", sub: true },
  "-",
  { t: "Utilities", sub: true },
  "-",
  { t: "Recent Files...", sub: true },
  "-",
  { t: "Exit" },
];
const treeRows = ["1L", "2L Top", "2L Bottom", "3L Top", "3L Middle", "3L Bottom", "2L Info", "3L Info", "Flag"];
const handles = [
  [356, 617], [973, 617], [1591, 617],
  [356, 681], [1591, 681],
  [356, 746], [973, 746], [1591, 746],
];
const guideLines = [642, 651, 667, 671, 680, 684, 687, 698, 720];
const wire = "rgba(205, 195, 195, 0.6)";
const wineLine = "#5e3a34";

export default function App() {
  return (
    <Win>
      <GlobalStyle />
      <StackDefs />

      <TitleBar>
        <GlassBlur $x={648} $y={3} $w={207} $h={19} $c="#a8cbee" />
        <GlassBlur $x={655} $y={6} $w={16} $h={14} $c="#5f8fd0" />
        <GlassBlur $x={672} $y={9} $w={120} $h={8} $c="#7f9fc0" />
        <GlassBlur $x={862} $y={3} $w={170} $h={19} $c="#7692ad" />
        <GlassBlur $x={885} $y={9} $w={120} $h={8} $c="#4f6a85" />
        <GlassBlur $x={330} $y={9} $w={70} $h={8} $c="#5d7890" />
        <GlassBlur $x={465} $y={9} $w={110} $h={8} $c="#5d7890" />
        <Quill size={18} />
        <TitleText>Inscriber G-Scribe HD Offline - UNTITLED.SCRIBELIST</TitleText>
        <CaptionGroup>
          <CaptionBtn $w={28}>
            <svg width="12" height="6"><rect y="2" width="12" height="3" fill="#fff" /></svg>
          </CaptionBtn>
          <CaptionBtn $w={26}>
            <svg width="11" height="12" fill="none" stroke="#fff" strokeWidth="1.4">
              <rect x="1" y="3" width="7" height="8" />
              <rect x="3" y="1" width="7" height="8" />
            </svg>
          </CaptionBtn>
          <CaptionBtn $w={47} $close>X</CaptionBtn>
        </CaptionGroup>
      </TitleBar>

      <MenuBar>
        <Quill size={19} />
        <MenuTitle $open $ml={2}>File</MenuTitle>
        <MenuTitle>Edit</MenuTitle>
        <MenuTitle>Playlist</MenuTitle>
        <MenuTitle>Tools</MenuTitle>
        <MenuTitle>Help</MenuTitle>
        <MdiButtons>
          <MdiBtn>_</MdiBtn>
          <MdiBtn>
            <svg width="9" height="9" fill="none" stroke="#5a6a80"><rect x=".5" y="2.5" width="6" height="6" /><path d="M2.5 2.5 V.5 H8.5 V6.5 H6.5" /></svg>
          </MdiBtn>
          <MdiBtn>
            <svg width="9" height="9" stroke="#5a6a80" strokeWidth="1.6"><path d="M1 1 L8 8 M8 1 L1 8" /></svg>
          </MdiBtn>
        </MdiButtons>
      </MenuBar>

      <TopRow>
        <Toolbar>
          <Slot $ml={12} $w={12} $h={30}>
            <svg width="12" height="30"><rect x=".5" y=".5" width="14" height="29" fill="#f4f8ff" stroke="#98b4dc" /></svg>
          </Slot>
          <Slot $ml={229} $w={14}>
            <svg width="14" height="18"><rect width="14" height="18" fill="#2a60c8" /></svg>
          </Slot>
          <PressedSlot $ml={11} $w={30} $h={30}><AIcon /></PressedSlot>
          <Slot $ml={5} $w={24}><ClockIcon /></Slot>
          <Slot $ml={6} $w={24}><DbIcon /></Slot>
          <Slot $ml={8} $w={24} $h={30}><FxIcon /></Slot>
          <Slot $ml={6} $w={24}><PaletteIcon /></Slot>
          <Slot $ml={6} $w={24}><RedBoxIcon /></Slot>
          <Slot $ml={8} $w={22}><HelpIcon /></Slot>
          <Sep $ml={13} />
          <Select $ml={7} $w={199} $pad={15}>1 Public 1</Select>
          <Slot $ml={15} $w={24} $h={28}><PencilIcon /></Slot>
          <Select $ml={17} $w={80}>Still</Select>
          <Slot $ml={12} $w={24}><CopyCheckIcon /></Slot>
          <Slot $ml={16} $w={20}><Tri up /></Slot>
          <Slot $ml={11} $w={20}><Tri /></Slot>
          <Slot $ml={17} $w={25} $h={28}><MonitorIcon /></Slot>
          <BarLabel $ml={10} $w={31}>Zoom</BarLabel>
          <Select $w={79}>Full Screen</Select>
        </Toolbar>
        <OfflineBox>
          <OfflineIcon />
          OFFLINE
        </OfflineBox>
      </TopRow>

      <Middle>
        <LeftPanel>
          <PanelHead $h={14} $m="0 3px" />
          <ThumbList>
            <ScrollTrack />
            <ThumbItem>
              <Thumb $frame="#f00000" />
              <ThumbCaption>1.V</ThumbCaption>
            </ThumbItem>
            <ThumbItem>
              <Thumb $frame="#ffff00" />
              <ThumbCaption $bold>SC</ThumbCaption>
            </ThumbItem>
            {[0, 1, 2, 3].map((i) => (
              <ThumbItem key={i}>
                <Thumb />
                <ThumbCaption />
              </ThumbItem>
            ))}
          </ThumbList>
          <LeftTools>
            <Slot $w={14} $h={16}><MiniPlus /></Slot>
            <Slot $ml={7} $w={14} $h={16}><MiniMinus /></Slot>
            <Slot $ml={8} $w={14} $h={16}><MiniUp /></Slot>
            <Slot $ml={7} $w={14} $h={16}><MiniUp down /></Slot>
            <Slot $ml={7} $w={14} $h={16}><MiniN /></Slot>
            <MenuButton $r={3} $t={5}>Menu</MenuButton>
          </LeftTools>
          <HeavyRule />
          <Counter>100</Counter>
          <ReadyRow>
            Ready
            <MenuButton $r={4} $t={5}>Menu</MenuButton>
          </ReadyRow>
        </LeftPanel>

        <Center>
          <RulerWrap><Ruler /></RulerWrap>
          <Canvas>
            <Checker />
            <Box $x={484} $y={182} $w={989} $h={558} $border="#62b862" />
            <Box $x={607} $y={182} $w={742} $h={558} $border="#55662e" />
            <Box $x={607} $y={182} $w={1} $h={558} $fill={wineLine} />
            <Box $x={1348} $y={182} $w={1} $h={558} $fill={wineLine} />
            <Box $x={977} $y={172} $w={1} $h={14} $fill="#5f7a3a" />
            <Box $x={977} $y={735} $w={1} $h={10} $fill="#5f7a3a" />
            <Box $x={472} $y={460} $w={16} $h={1} $fill="#62b862" />
            <Box $x={598} $y={460} $w={16} $h={1} $fill={wineLine} />
            <Box $x={1342} $y={460} $w={16} $h={1} $fill={wineLine} />
            <Box $x={1466} $y={460} $w={16} $h={1} $fill="#62b862" />
            <Box $x={613} $y={607} $w={178} $h={28} $border={wire} $bw={2} />
            <Box $x={607} $y={634} $w={547} $h={94} $border={wire} $bw={2} />
            <Box $x={616} $y={698} $w={538} $h={30} $border={wire} $bw={2} />
            {guideLines.map((y) => (
              <Box key={y} $x={607} $y={y} $w={546} $h={2} $fill={wire} />
            ))}
            {handles.map(([x, y]) => (
              <Box key={x + "-" + y} $x={x} $y={y} $w={8} $h={8} $fill="#d4d4d4" />
            ))}
            <GovText>
              <Cap>G</Cap>OV. <Cap>T</Cap>OM <Cap>W</Cap>OLF
            </GovText>
          </Canvas>
          <PosBar>
            <BarLabel $w={45}>Position</BarLabel>
            <BarLabel $w={9}>X</BarLabel>
            <Field $w={48}>0.00</Field>
            <Spin ml={1} />
            <BarLabel $ml={8} $w={8}>Y</BarLabel>
            <Field $w={49}>790.00</Field>
            <Spin ml={2} />
            <Sep $ml={2} $h={30} />
            <Slot $ml={7} $w={22}><MoveIcon /></Slot>
            <Drop $ml={4} />
            <BarLabel $ml={8} $w={50}>Pixel Shift:</BarLabel>
            <Field $ml={6} $w={44}>10</Field>
            <Spin ml={1} />
            <Sep $ml={9} $h={30} />
            <Slot $ml={6} $w={17}><AlignLeft /></Slot>
            <Drop $ml={8} />
            <Slot $ml={8} $w={20}><AlignDist /></Slot>
            <Drop $ml={6} />
            <Sep $ml={8} $h={30} />
            <Slot $ml={4} $w={20}><Stack3 /></Slot>
            <Slot $ml={8} $w={18}><StackFwd /></Slot>
            <Slot $ml={8} $w={20}><Stack3 back /></Slot>
            <Slot $ml={8} $w={18}><StackFwd back /></Slot>
            <Slot $ml={8} $w={20}><CircleSq /></Slot>
            <Sep $ml={8} $h={30} />
            <Slot $ml={4} $w={22}><Flip /></Slot>
            <Slot $ml={5} $w={22}><Flip left /></Slot>
            <Sep $ml={5} $h={30} />
            <Slot $ml={4} $w={22}><GroupIcon /></Slot>
            <Slot $ml={5} $w={22}><GroupIcon split /></Slot>
            <Sep $ml={5} $h={30} />
            <Slot $ml={4} $w={21}><TagIcon /></Slot>
            <Sep $ml={6} $h={30} />
            <Slot $ml={4} $w={22}><LockGuide /></Slot>
            <Drop $ml={3} />
            <Sep $ml={2} $h={30} />
            <Slot $ml={4} $w={20}><RowsIcon /></Slot>
            <Drop $ml={1} />
            <Sep $ml={6} $h={30} />
            <Slot $ml={4} $w={21}><CheckTextIcon /></Slot>
            <Drop $ml={4} />
          </PosBar>
        </Center>

        <RightPanel>
          <PanelHead>Tools</PanelHead>
          <ToolGrid>
            {toolGlyphs.map((glyph, i) => (
              <RoundTool key={i} $on={i === 0}>
                <svg width="17" height="17" viewBox="0 0 16 16">{glyph}</svg>
              </RoundTool>
            ))}
          </ToolGrid>
          <PanelHead $m="9px 0 0">Libraries</PanelHead>
          <TabRow>
            <SmallTab $on $w={38}>Tree</SmallTab>
            <SmallTab $w={37}>Media</SmallTab>
            <SmallTab $ml={2} $w={37}>Styles</SmallTab>
          </TabRow>
          <TreeFrame>
            {treeRows.map((name, i) => (
              <TreeRow key={i}>
                <RtxBadge>RTX</RtxBadge>
                <TreeName>{name}</TreeName>
                <LockIcon />
                <Slot $ml={5} $w={15} $h={15}><EyeIcon /></Slot>
              </TreeRow>
            ))}
            <TreeRow>
              <FlagThumb />
              <TreeName>Flag</TreeName>
              <LockIcon />
            </TreeRow>
            <TreeRow $sel>
              <GThumb />
              <TreeName>Lower 3rd</TreeName>
              <LockIcon />
            </TreeRow>
            <MenuButton $r={5} $t={539}>Menu</MenuButton>
          </TreeFrame>
        </RightPanel>
      </Middle>

      <BottomRow>
        <ProgramPanel>
          <ProgramTabs>
            <ProgTab $w={46}>Program</ProgTab>
            <ProgTab $ml={3} $w={18}>
              <svg width="14" height="12"><path d="M0 0 L7 6 L0 12Z M7 0 L14 6 L7 12Z" fill="#000" /></svg>
            </ProgTab>
            <ProgTab $ml={2} $w={13} $on>1</ProgTab>
            <ProgTab $w={14}>2</ProgTab>
            <ProgTab $ml={62} $w={29}>CLR</ProgTab>
          </ProgramTabs>
          <Preview>
            <PreviewMain>
              <Harris k={0.5} />
              <TinyBrand $s={9} $mt={5}>Inscriber</TinyBrand>
              <TinyBrand $s={4} $mt={2}>HD - High Definition</TinyBrand>
            </PreviewMain>
            <PreviewLow>
              ---<br />---
            </PreviewLow>
          </Preview>
        </ProgramPanel>

        <AttrPanel>
          <AttrTabs>
            <AttrTab $on $w={62}>Attributes</AttrTab>
            <AttrTab $w={40}>Face</AttrTab>
            <AttrTab $w={41}>Edge</AttrTab>
            <AttrTab $w={41}>Depth</AttrTab>
            <AttrTab $w={47}>Shadow</AttrTab>
          </AttrTabs>
          <GroupBox>
            <legend>Formatting</legend>
            <FormGrid>
              <span>Width</span>
              <InputCell><Field $w={57}>1920</Field><Spin ml={1} /></InputCell>
              <Unit>Pixels</Unit>
              <span>Height</span>
              <InputCell><Field $w={57}>200</Field><Spin ml={1} /></InputCell>
              <Unit>Pixels</Unit>
              <span>Rotation</span>
              <InputCell><Field $w={57}>0</Field><Spin ml={1} /></InputCell>
              <span />
            </FormGrid>
            <FormGrid $mt={3}>
              <span>Form</span>
              <Select $w={191}>rectangle</Select>
              <span />
            </FormGrid>
            <CheckList>
              <CheckRow><CheckBox />Maintain aspect ratio</CheckRow>
              <CheckRow><CheckBox />Relative Embellishments</CheckRow>
            </CheckList>
          </GroupBox>
        </AttrPanel>

        <BlueFill $w={293} />
        <ScrapPanel>
          <LogoBox><Harris /></LogoBox>
          <ScrapHead>Scrapbook</ScrapHead>
        </ScrapPanel>
        <BlueFill $grow />
      </BottomRow>

      <StatusBar><NumCell>NUM</NumCell></StatusBar>

      <Taskbar>
        <OrbSlot><Orb /></OrbSlot>
        <TaskSlot $running><FolderIcon /></TaskSlot>
        <TaskSlot><IeIcon /></TaskSlot>
        <TaskSlot><WmpIcon /></TaskSlot>
        <TaskSlot $running><FirefoxIcon /></TaskSlot>
        <TaskSlot><PptIcon /></TaskSlot>
        <TaskSlot><WordIcon /></TaskSlot>
        <TaskSlot><ChromeIcon /></TaskSlot>
        <TaskSlot $running><TaskQuill /></TaskSlot>
        <TaskSlot $running><CmdIcon /></TaskSlot>
        <TaskSlot $running $active><TaskQuill /></TaskSlot>
        <Tray>
          <TrayIcon $ml={0}>
            <svg width="10" height="6"><path d="M0 6 L5 0 L10 6Z" fill="#eee" /></svg>
          </TrayIcon>
          <TrayIcon $ml={14}><TrayFlag /></TrayIcon>
          <TrayIcon $ml={8}><TrayNet /></TrayIcon>
          <TrayIcon $ml={9}><TraySpeaker /></TrayIcon>
          <Clock>1:59 PM<br />8/7/2015</Clock>
          <ShowDesktop />
        </Tray>
      </Taskbar>

      <Popup $x={24} $y={41} $w={234} $gutter={29}>
        {fileItems.map((it, i) =>
          it === "-" ? (
            <MenuSep key={i} $ml={29} />
          ) : (
            <Item key={i} $pad={30} $hot={it.hot}>
              <span>{it.t}</span>
              {it.k && <span>{it.k}</span>}
              {it.sub && <Arrow />}
            </Item>
          )
        )}
      </Popup>
      <Popup $x={253} $y={167} $w={253} $gutter={29}>
        <Item $pad={31} $hot>
          <span>CG Layouts...</span>
          <span>Ctrl+Shift+R</span>
        </Item>
        <Item $pad={31}>
          <span>News Edit Tables...</span>
        </Item>
      </Popup>
    </Win>
  );
}
